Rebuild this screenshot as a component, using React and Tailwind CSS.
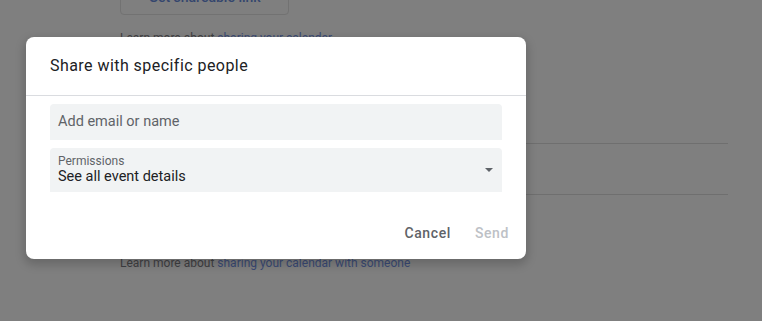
import React from "react";

export default function App() {
  return (
    <div className="relative w-[762px] h-[321px] overflow-hidden bg-[#7f7f7f]" style={{ fontFamily: "Roboto, 'Liberation Sans', sans-serif" }}>
      {/* dimmed page behind */}
      <div className="pl-[120px] w-[728px] flex flex-col">
        <div className="-mt-[21px] w-[169px] h-[36px] rounded-[4px] border border-[#727272] flex items-center justify-center text-[14px] font-medium text-[#34466e]">
          Get shareable link
        </div>
        <div className="mt-[13px] text-[12px] leading-[20px] text-[#3f4043]">
          Learn more about <span className="text-[#3a4a74]">sharing your calendar</span>
        </div>
        <div className="mt-[95px] border-t border-[#6f6f6f]" />
        <div className="mt-[50px] border-t border-[#6f6f6f]" />
        <div className="mt-[58px] text-[12px] leading-[20px] text-[#3f4043]">
          Learn more about <span className="text-[#3a4a74]">sharing your calendar with someone</span>
        </div>
      </div>

      {/* dialog */}
      <div className="absolute left-[26px] top-[37px] w-[500px] bg-white rounded-[8px] shadow-[0_4px_10px_2px_rgba(0,0,0,0.18)] flex flex-col">
        <div className="h-[58px] flex items-center px-[24px] text-[16px] text-[#202124] tracking-[0.45px]">
          Share with specific people
        </div>
        <div className="border-t border-[#dadce0]" />
        <div className="px-[24px] pt-[8px] flex flex-col gap-[8px]">
          <div className="h-[36px] bg-[#f1f3f4] rounded-t-[4px] flex items-center px-[8px] text-[14.5px] text-[#5f6368]">
            Add email or name
          </div>
          <div className="h-[44px] bg-[#f1f3f4] rounded-t-[4px] flex items-center px-[8px]">
            <div className="flex-1 flex flex-col">
              <span className="text-[12px] leading-[14px] text-[#5f6368]">Permissions</span>
              <span className="text-[14.5px] leading-[18px] text-[#202124]">See all event details</span>
            </div>
            <svg width="8" height="4" viewBox="0 0 8 4" className="mr-[1px] mb-[1px]">
              <path d="M0 0 L8 0 L4 4 Z" fill="#5f6368" />
            </svg>
          </div>
        </div>
        <div className="flex justify-end gap-[8px] pt-[23px] pb-[8px] pr-[9px]">
          <div className="h-[36px] px-[8px] flex items-center text-[14px] font-medium text-[#5f6368] tracking-[0.6px]">Cancel</div>
          <div className="h-[36px] px-[8px] flex items-center text-[14px] font-medium text-[#bdc1c6] tracking-[0.6px]">Send</div>
        </div>
      </div>
    </div>
  );
}
